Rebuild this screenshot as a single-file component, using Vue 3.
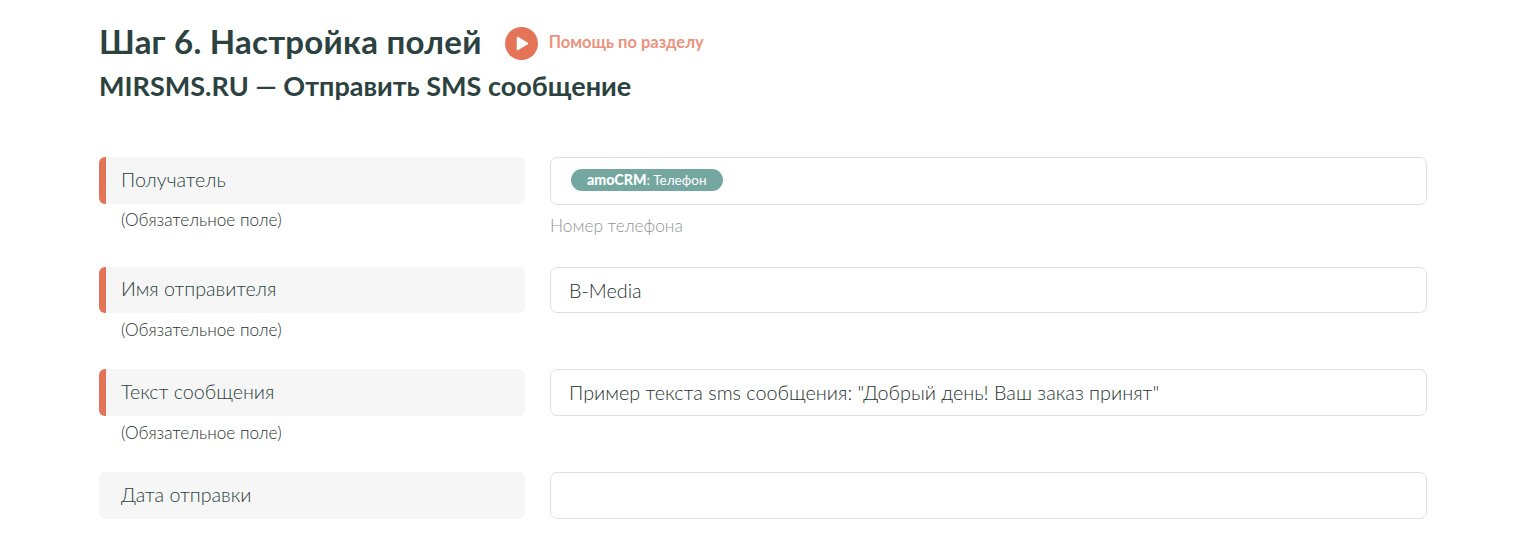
<script setup>
const title = 'Шаг 6. Настройка полей'
const subtitle = 'MIRSMS.RU — Отправить SMS сообщение'

const rows = [
  { label: 'Получатель', required: true, tag: true, hint: 'Номер телефона', cls: 'row-first' },
  { label: 'Имя отправителя', required: true, value: 'B-Media', cls: 'row-second' },
  { label: 'Текст сообщения', required: true, value: 'Пример текста sms сообщения: "Добрый день! Ваш заказ принят"', cls: 'row-third' },
  { label: 'Дата отправки', required: false, value: '', cls: 'row-fourth' },
]
</script>

<template>
  <div class="page">
    <div class="head">
      <h1 class="title">{{ title }}</h1>
      <a class="help">
        <svg class="help-icon" width="33" height="33" viewBox="0 0 33 33">
          <circle cx="16.5" cy="16.5" r="16.5" fill="#e47458" />
          <path d="M12.5 10.5 L22.5 16.5 L12.5 22.5 Z" fill="#fff" stroke="#fff" stroke-width="1.5" stroke-linejoin="round" />
        </svg>
        <span class="help-text">Помощь по разделу</span>
      </a>
    </div>
    <h2 class="subtitle">{{ subtitle }}</h2>

    <div class="fields">
      <div v-for="row in rows" :key="row.label" class="row" :class="row.cls">
        <div class="left">
          <div class="label" :class="{ required: row.required }">{{ row.label }}</div>
          <div v-if="row.required" class="note">(Обязательное поле)</div>
        </div>
        <div class="right">
          <div class="input">
            <span v-if="row.tag" class="tag"><b>amoCRM</b>: Телефон</span>
            <template v-else>{{ row.value }}</template>
          </div>
          <div v-if="row.hint" class="hint">{{ row.hint }}</div>
        </div>
      </div>
    </div>
  </div>
</template>

<style scoped>
.page {
  width: 1427px;
  height: 558px;
  box-sizing: border-box;
  padding: 22px 0 0 99px;
  font-family: "Lato", "Noto Sans", sans-serif;
  color: #2b4240;
  overflow: hidden;
}

.head {
  display: flex;
  align-items: center;
  height: 43px;
}

.title {
  margin: 0 0 5px;
  font-size: 33px;
  line-height: 43px;
  font-weight: 700;
  color: #2b4240;
  letter-spacing: 0.25px;
}

.help {
  display: flex;
  align-items: center;
  margin-left: 23px;
  font-size: 16.5px;
  font-weight: 700;
  color: #ec9280;
}

.help-icon {
  margin-right: 11px;
}

.help-text {
  margin-bottom: 3px;
}

.subtitle {
  margin: 5px 0 0;
  font-size: 27px;
  line-height: 32px;
  font-weight: 700;
  color: #2b4240;
}

.fields {
  margin-top: 55px;
}

.row {
  display: grid;
  grid-template-columns: 426px 877px;
  column-gap: 25px;
}

.row-first {
  height: 110px;
}

.row-second {
  height: 102px;
}

.row-third {
  height: 103px;
}

.label {
  height: 47px;
  box-sizing: border-box;
  padding-left: 22px;
  padding-bottom: 3px;
  display: flex;
  align-items: center;
  background: #f6f6f6;
  border-radius: 6px;
  font-size: 19.7px;
  color: #2b4240;
  font-weight: 300;
}

.row-second .label,
.row-second .input {
  height: 46px;
}

.label.required {
  border-left: 7px solid #e47458;
  padding-left: 15px;
}

.note {
  margin-top: 7px;
  padding-left: 22px;
  font-size: 17.2px;
  font-weight: 300;
  line-height: 20px;
  color: #1f3331;
}

.row-first .note {
  margin-top: 6px;
}

.input {
  height: 47px;
  box-sizing: border-box;
  padding: 0 18px 1px;
  display: flex;
  align-items: center;
  background: #fff;
  border: 1px solid #e0e0e0;
  border-radius: 7px;
  font-size: 19.8px;
  font-weight: 300;
  color: #1f3331;
}

.row-first .input {
  height: 48px;
  padding: 11px 20px 0;
  align-items: flex-start;
}

.tag {
  display: inline-block;
  height: 22px;
  line-height: 21px;
  padding: 0 16px;
  background: #74a7a0;
  border-radius: 11px;
  font-size: 13.5px;
  font-weight: 400;
  color: #fff;
}

.tag b {
  font-size: 14.2px;
  font-weight: 900;
}

.hint {
  margin-top: 10px;
  font-size: 17.3px;
  font-weight: 300;
  line-height: 22px;
  color: #8f9594;
}
</style>
